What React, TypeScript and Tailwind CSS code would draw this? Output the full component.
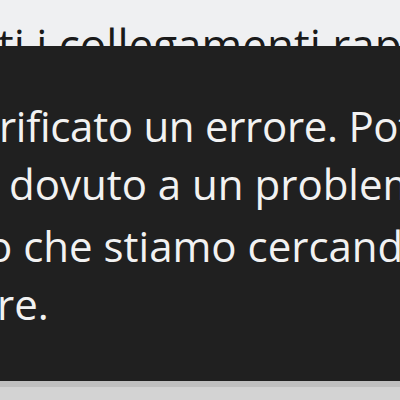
export default function App() {
  const font = { fontFamily: '"Open Sans", "Noto Sans", "Liberation Sans", sans-serif' };
  return (
    <div className="w-[400px] h-[400px] overflow-hidden flex flex-col bg-[#eff0f2]" style={font}>
      <div className="h-[46px] overflow-hidden shrink-0">
        <div className="mt-[15px] ml-[-2px] whitespace-nowrap text-[44px] leading-[58px] text-[#1a1a1a]">
          ti i collegamenti rapidi
        </div>
      </div>
      <div className="h-[335px] shrink-0 bg-[#202020] overflow-hidden pt-[51px] text-[42px] leading-[58px] text-[#f2f2f2]">
        <div className="whitespace-nowrap ml-[-1px] tracking-[-0.3px]">rificato un errore. Potrebbe</div>
        <div className="whitespace-nowrap ml-[9px]">dovuto a un problema</div>
        <div className="whitespace-nowrap ml-[-13px] mt-[4px]">o che stiamo cercando di</div>
        <div className="whitespace-nowrap ml-[-3px]">re.</div>
      </div>
      <div className="h-[6px] shrink-0 bg-[#bfbfbf]" />
      <div className="flex-1 bg-[#d3d3d3]" />
    </div>
  );
}
